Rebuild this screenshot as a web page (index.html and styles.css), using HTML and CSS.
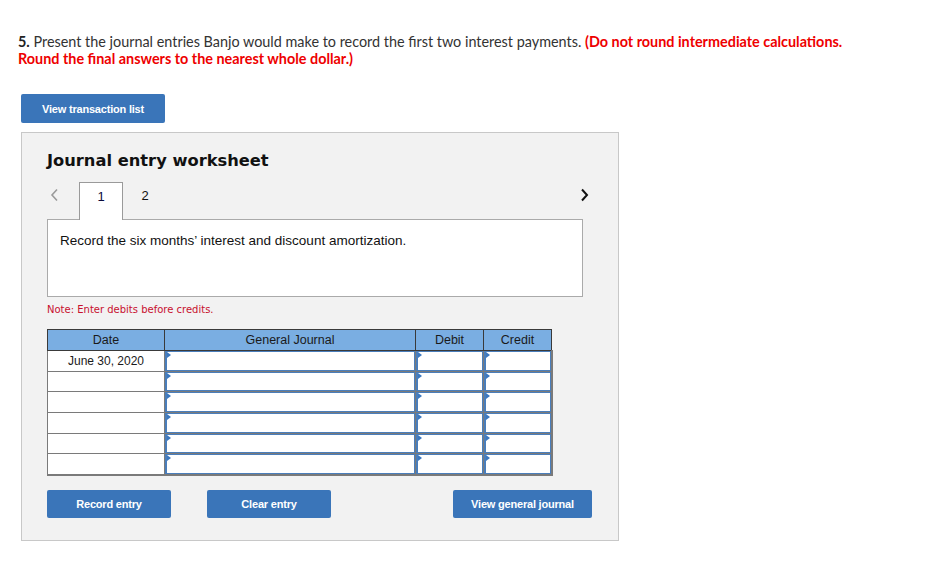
FILE: index.html
```html
<!DOCTYPE html>
<html lang="en">
<head>
<meta charset="utf-8">
<title>Journal entry worksheet</title>
<link rel="stylesheet" href="styles.css">
</head>
<body>
<p class="prompt"><b>5.</b> Present the journal entries Banjo would make to record the first two interest payments. <span class="red">(Do not round intermediate calculations.<br>Round the final answers to the nearest whole dollar.)</span></p>

<button class="btn btn-top" type="button">View transaction list</button>

<section class="worksheet">
  <h2 class="ws-title">Journal entry worksheet</h2>
  <div class="tabs">
    <span class="arrow prev"><svg width="9" height="14" viewBox="0 0 9 14"><path d="M7 1.5 L2 7 L7 12.5" fill="none" stroke="#9a9a9a" stroke-width="1.6"/></svg></span>
    <span class="tab active">1</span>
    <span class="tab">2</span>
    <span class="arrow next"><svg width="9" height="14" viewBox="0 0 9 14"><path d="M2 1.5 L7 7 L2 12.5" fill="none" stroke="#111" stroke-width="2"/></svg></span>
  </div>
  <div class="desc">Record the six months’ interest and discount amortization.</div>
  <p class="note">Note: Enter debits before credits.</p>
  <table class="journal">
    <colgroup>
      <col class="c-date"><col class="c-gj"><col class="c-dr"><col class="c-cr">
    </colgroup>
    <thead>
      <tr><th>Date</th><th>General Journal</th><th>Debit</th><th>Credit</th></tr>
    </thead>
    <tbody>
      <tr><td class="date">June 30, 2020</td><td class="in"><div class="field"></div></td><td class="in"><div class="field"></div></td><td class="in"><div class="field"></div></td></tr>
      <tr><td class="date"></td><td class="in"><div class="field"></div></td><td class="in"><div class="field"></div></td><td class="in"><div class="field"></div></td></tr>
      <tr><td class="date"></td><td class="in"><div class="field"></div></td><td class="in"><div class="field"></div></td><td class="in"><div class="field"></div></td></tr>
      <tr><td class="date"></td><td class="in"><div class="field"></div></td><td class="in"><div class="field"></div></td><td class="in"><div class="field"></div></td></tr>
      <tr><td class="date"></td><td class="in"><div class="field"></div></td><td class="in"><div class="field"></div></td><td class="in"><div class="field"></div></td></tr>
      <tr><td class="date"></td><td class="in"><div class="field"></div></td><td class="in"><div class="field"></div></td><td class="in"><div class="field"></div></td></tr>
    </tbody>
  </table>
  <div class="actions">
    <button class="btn btn-act" type="button">Record entry</button>
    <button class="btn btn-act" type="button">Clear entry</button>
    <button class="btn btn-act btn-view" type="button">View general journal</button>
  </div>
</section>
</body>
</html>
```

FILE: styles.css
```css
* { box-sizing: border-box; }

body {
  margin: 0;
  padding: 34px 0 0 18px;
  background: #fff;
  font-family: Lato, "Open Sans", sans-serif;
  color: #333;
}

.prompt {
  margin: 0;
  font-size: 14.4px;
  line-height: 16.5px;
  color: #333;
}
.prompt b { color: #222; }
.red { color: #ee0000; font-weight: bold; }

.btn {
  display: block;
  border: none;
  border-radius: 2px;
  background: #3a75b9;
  color: #fff;
  font-family: "Liberation Sans", Arial, sans-serif;
  font-weight: bold;
  font-size: 11px;
  letter-spacing: -0.2px;
  padding: 0;
  cursor: pointer;
}

.btn-top {
  margin: 27px 0 0 3px;
  width: 144px;
  height: 29px;
}

.worksheet {
  margin: 9px 0 0 3px;
  width: 598px;
  height: 409px;
  background: #f2f2f2;
  border: 1px solid #c8c8c8;
  padding: 0 0 0 25px;
}

.ws-title {
  margin: 17px 0 0 0;
  font-family: "DejaVu Sans", Verdana, sans-serif;
  font-weight: bold;
  font-size: 16.3px;
  line-height: 21px;
  color: #111;
}

.tabs {
  margin-top: 11px;
  display: flex;
  align-items: stretch;
  width: 545px;
  height: 37px;
}
.arrow {
  display: flex;
  align-items: center;
  height: 26px;
}
.prev { width: 32px; padding-left: 3px; }
.next { margin-left: auto; margin-right: 3px; }

.tab {
  width: 44px;
  height: 37px;
  padding-top: 6px;
  text-align: center;
  font-family: "Liberation Sans", Arial, sans-serif;
  font-size: 13px;
  color: #111;
}
.tab.active {
  background: #fff;
  border: 1px solid #9a9a9a;
  border-bottom: none;
  color: #0a0a3a;
  position: relative;
  z-index: 1;
  margin-bottom: -1px;
  height: 38px;
}

.desc {
  width: 536px;
  height: 78px;
  background: #fff;
  border: 1px solid #aaa;
  padding: 13px 0 0 12px;
  font-family: "Liberation Sans", Tahoma, sans-serif;
  font-size: 13.5px;
  color: #111;
}

.note {
  margin: 6px 0 0 0;
  font-family: "DejaVu Sans", Verdana, sans-serif;
  font-size: 10px;
  line-height: 14px;
  color: #c8102e;
}

.journal {
  margin-top: 12px;
  border-collapse: collapse;
  table-layout: fixed;
  width: 504px;
  font-family: "Liberation Sans", Arial, sans-serif;
  font-size: 12px;
}
.c-date { width: 117px; }
.c-gj { width: 251px; }
.c-dr { width: 68px; }
.c-cr { width: 68px; }

.journal th {
  height: 21px;
  padding: 0;
  background: #7aaee2;
  border: 1px solid #3a3a3a;
  font-weight: normal;
  font-size: 12.5px;
  color: #1a1a1a;
}
.journal td {
  height: 20.7px;
  padding: 0;
  border: 1px solid #7a7a7a;
  background: #fff;
}
.journal tbody tr:last-child td { border-bottom-width: 2px; }
.journal tbody td:last-child { border-right-width: 2px; }
.journal td.date {
  text-align: center;
  color: #1a1a1a;
  vertical-align: middle;
}
.journal td.in { vertical-align: top; }
.field {
  position: relative;
  height: 19.7px;
  border: 1px solid #4a7ebb;
  border-left-width: 2px;
  background: #fff;
}
.field::before {
  content: "";
  position: absolute;
  left: 0;
  top: 0;
  border-left: 4px solid #3b78c0;
  border-top: 3px solid transparent;
  border-bottom: 3px solid transparent;
}

.actions {
  margin-top: 14px;
  display: flex;
  width: 545px;
}
.btn-act {
  width: 124px;
  height: 28px;
}
.btn-act + .btn-act { margin-left: 36px; }
.btn-view {
  margin-left: auto !important;
  width: 139px;
}
```
